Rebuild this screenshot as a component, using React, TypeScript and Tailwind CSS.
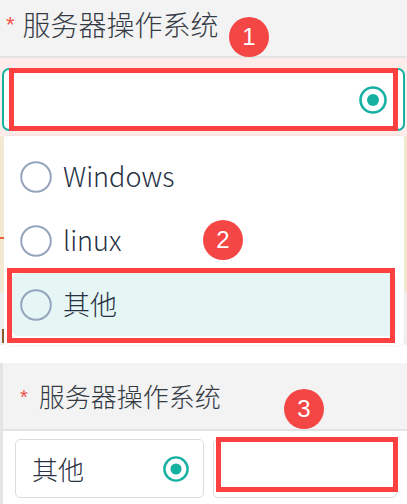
import React from "react";

const base = { fontFamily: '"Noto Sans CJK SC", sans-serif' };

function Badge({ n, className }: { n: string; className: string }) {
  return (
    <div
      className={`absolute w-[40px] h-[40px] rounded-full bg-[#f54646] text-white flex items-center justify-center text-[24px] leading-none ${className}`}
      style={{ fontFamily: '"Liberation Sans", Arial, sans-serif' }}
    >
      {n}
    </div>
  );
}

function Checked({ size }: { size: number }) {
  return (
    <svg width={size} height={size} viewBox="0 0 28 28">
      <circle cx="14" cy="14" r="12.5" fill="none" stroke="#16b1a1" strokeWidth="2.6" />
      <circle cx="14" cy="14" r="6" fill="#16b1a1" />
    </svg>
  );
}

function Empty() {
  return (
    <svg width="32" height="32" viewBox="0 0 32 32" className="shrink-0">
      <circle cx="16" cy="16" r="14.8" fill="none" stroke="#95a4bd" strokeWidth="2" />
    </svg>
  );
}

export default function App() {
  return (
    <div className="relative w-[407px] h-[504px] overflow-hidden bg-white text-[#263143] font-light" style={base}>
      {/* Section 1 header */}
      <div className="h-[58px] bg-[#f3f3f3] border-b-2 border-[#e3e3e3] flex items-start pl-[6px] pt-[6px]">
        <span className="text-[#f0524a] text-[22px] leading-none mt-[8px] mr-[8px] font-normal" style={{ fontFamily: '"Liberation Sans", sans-serif' }}>*</span>
        <span className="text-[28px] leading-[36px] text-[#343b45]">服务器操作系统</span>
      </div>
      {/* Section 2 pink band with select */}
      <div className="h-[78px] bg-[#fdecea] pt-[10px] px-[2px]">
        <div className="h-[63px] rounded-[7px] border-2 border-[#16b1a1] bg-white flex items-center justify-end pr-[16px]">
          <Checked size={28} />
        </div>
      </div>
      {/* Section 3 dropdown */}
      <div className="flex h-[209px]">
        <div className="w-[4px] flex flex-col">
          <div className="h-[157px] bg-[#f3e8d2] relative">
            <div className="absolute left-0 top-[101px] w-[4px] h-[2px] bg-[#e8603c]" />
          </div>
          <div className="flex-1 bg-[#eeeeee] relative">
            <div className="absolute left-[2px] top-[36px] w-[2px] h-[14px] bg-[#8a5a2b]" />
          </div>
        </div>
        <div className="flex-1 bg-white rounded-[6px] pt-[9px] pb-[8px] px-[8px] flex flex-col shadow-[0_0_4px_rgba(0,0,0,0.08)]">
          <div className="h-[64px] flex items-center pl-[8px] gap-[11px]">
            <Empty />
            <span className="text-[27px] leading-[36px] -mt-[2px]">Windows</span>
          </div>
          <div className="h-[64px] flex items-center pl-[8px] gap-[11px]">
            <Empty />
            <span className="text-[27px] leading-[36px] -mt-[2px]">linux</span>
          </div>
          <div className="h-[63px] flex items-center pl-[8px] gap-[11px] bg-[#e6f6f4] rounded-[6px]">
            <Empty />
            <span className="text-[27px]">其他</span>
          </div>
        </div>
        <div className="w-[3px] flex flex-col">
          <div className="h-[157px] bg-[#f1e6cf]" />
          <div className="flex-1 bg-[#eeeeee]" />
        </div>
      </div>
      {/* spacer */}
      <div className="h-[18px] bg-white" />
      {/* Section 4 */}
      <div className="border-l-[3px] border-[#e4e4e4] h-[141px]">
        <div className="h-[68px] bg-[#f3f3f3] border-b-2 border-[#e3e3e3] flex items-center pl-[17px]">
          <span className="text-[#f0524a] text-[20px] leading-none mt-[2px] mr-[11px] font-normal" style={{ fontFamily: '"Liberation Sans", sans-serif' }}>*</span>
          <span className="text-[26px] leading-[34px] text-[#343b45]">服务器操作系统</span>
        </div>
        <div className="flex gap-[9px] pl-[12px] pt-[8px]">
          <div className="w-[189px] h-[59px] rounded-[5px] border border-[#dcdcdc] flex items-center justify-between pl-[16px] pr-[14px]">
            <span className="text-[26px] text-[#2a3140]">其他</span>
            <Checked size={26} />
          </div>
          <div className="w-[184px] h-[59px] rounded-[5px] border border-[#dcdcdc]" />
        </div>
      </div>

      {/* Annotation overlays */}
      <div className="absolute left-[9px] top-[68px] w-[389px] h-[63px] border-[5px] border-[#fd4040]" />
      <div className="absolute left-[7px] top-[268px] w-[388px] h-[75px] border-[5px] border-[#fd4040]" />
      <div className="absolute left-[216px] top-[437px] w-[182px] h-[55px] border-[5px] border-[#fd4040]" />
      <Badge n="1" className="left-[229px] top-[17px]" />
      <Badge n="2" className="left-[203px] top-[220px]" />
      <Badge n="3" className="left-[284px] top-[389px]" />
    </div>
  );
}
